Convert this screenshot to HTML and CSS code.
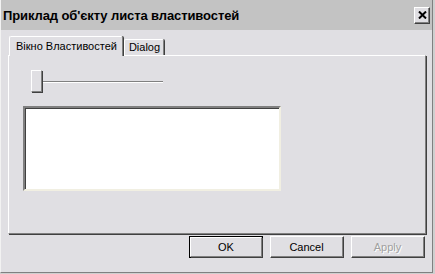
FILE: index.html
```html
<!DOCTYPE html>
<html lang="uk">

<head>
    <meta charset="UTF-8">
    <meta name="viewport" content="width=device-width, initial-scale=1.0">
    <title>Приклад об'єкту листа властивостей</title>
    <link rel="stylesheet" href="styles.css">
</head>

<body>
    <div class="window">
        <div class="titlebar">
            <span class="caption">Приклад об'єкту листа властивостей</span>
            <span class="close">
                <svg width="9" height="8" viewBox="0 0 9 8">
                    <path d="M1 0.5 L8 7.5 M8 0.5 L1 7.5" stroke="#000" stroke-width="2" fill="none" />
                </svg>
            </span>
        </div>
        <div class="content">
            <div class="tabs">
                <span class="tab active">Вікно Властивостей</span>
                <span class="tab">Dialog</span>
            </div>
            <div class="panel">
                <div class="slider">
                    <span class="thumb"></span>
                    <span class="track"></span>
                </div>
                <div class="listbox"></div>
            </div>
            <div class="buttons">
                <span class="btn default"><span class="inner">OK</span></span>
                <span class="btn"><span class="inner">Cancel</span></span>
                <span class="btn disabled"><span class="inner">Apply</span></span>
            </div>
        </div>
    </div>
</body>

</html>
```

FILE: styles.css
```css
body {
    margin: 0;
    padding: 0;
    background-color: #cfcfcf;
}

.window {
    width: 433px;
    height: 273px;
    box-sizing: border-box;
    background-color: #e0dfe3;
    border-left: 1px solid #f2f2f2;
    border-right: 1px solid #808080;
    border-bottom: 1px solid #808080;
    font-family: "Liberation Sans", Arial, sans-serif;
    font-size: 11px;
    color: #000;
    display: flex;
    flex-direction: column;
}

.titlebar {
    height: 30px;
    flex-shrink: 0;
    background-color: #c3c3c3;
    display: flex;
    align-items: center;
    padding: 0 2px 0 2px;
}

.caption {
    font-weight: bold;
    font-size: 13px;
    letter-spacing: -0.1px;
}

.close {
    margin-left: auto;
    width: 14px;
    height: 12px;
    padding-top: 3px;
    background-color: #e0dfe3;
    border-top: 1px solid #fff;
    border-left: 1px solid #fff;
    border-right: 1px solid #404040;
    border-bottom: 1px solid #404040;
    box-shadow: inset -1px -1px 0 #808080;
    display: flex;
    justify-content: center;
}

.content {
    flex: 1;
    padding: 5px 6px 0 7px;
    display: flex;
    flex-direction: column;
}

.tabs {
    display: flex;
    align-items: flex-end;
    height: 20px;
    flex-shrink: 0;
    padding-left: 1px;
    position: relative;
    z-index: 1;
}

.tab {
    height: 15px;
    line-height: 15px;
    padding: 0 3px 0 4px;
    border-top: 1px solid #fff;
    border-left: 1px solid #fff;
    border-right: 1px solid #808080;
    box-shadow: 1px 0 0 #404040;
    margin-right: 1px;
    border-radius: 2px 2px 0 0;
}

.tab.active {
    height: 19px;
    line-height: 19px;
    padding: 0 5px 0 6px;
    background-color: #e0dfe3;
    margin-bottom: -1px;
}

.panel {
    box-sizing: border-box;
    height: 179px;
    flex-shrink: 0;
    border-top: 1px solid #fff;
    border-left: 1px solid #fff;
    border-right: 1px solid #808080;
    border-bottom: 1px solid #808080;
    box-shadow: 1px 1px 0 #404040;
    padding: 14px 0 0 14px;
    display: flex;
    flex-direction: column;
}

.slider {
    display: flex;
    align-items: center;
    height: 22px;
    padding-left: 8px;
}

.thumb {
    width: 9px;
    height: 20px;
    background-color: #e0dfe3;
    border-top: 1px solid #fff;
    border-left: 1px solid #fff;
    border-right: 1px solid #808080;
    border-bottom: 1px solid #808080;
    box-shadow: 1px 1px 0 #404040;
}

.track {
    width: 120px;
    height: 1px;
    margin-left: 1px;
    background-color: #808080;
    border-bottom: 1px solid #fff;
    margin-top: 1px;
}

.listbox {
    margin-top: 14px;
    width: 254px;
    height: 81px;
    background-color: #fff;
    border-top: 2px solid #808080;
    border-left: 2px solid #808080;
    border-right: 2px solid #f1efe2;
    border-bottom: 2px solid #f1efe2;
    box-shadow: inset 1px 1px 0 #404040;
}

.buttons {
    display: flex;
    justify-content: flex-end;
    gap: 7px;
    padding-top: 2px;
    padding-right: 1px;
}

.btn {
    width: 74px;
    height: 22px;
    box-sizing: border-box;
    background-color: #e0dfe3;
    border-top: 1px solid #fff;
    border-left: 1px solid #fff;
    border-right: 1px solid #404040;
    border-bottom: 1px solid #404040;
    display: flex;
}

.btn .inner {
    flex: 1;
    display: flex;
    align-items: center;
    justify-content: center;
    border-right: 1px solid #808080;
    border-bottom: 1px solid #808080;
}

.btn.default {
    border: 1px solid #000;
}

.btn.default .inner {
    border-top: 1px solid #fff;
    border-left: 1px solid #fff;
    border-right: 1px solid #808080;
    border-bottom: 1px solid #808080;
    box-shadow: 1px 1px 0 #404040;
}

.btn.disabled .inner {
    color: #a0a0a0;
    text-shadow: 1px 1px 0 #fff;
}
```
